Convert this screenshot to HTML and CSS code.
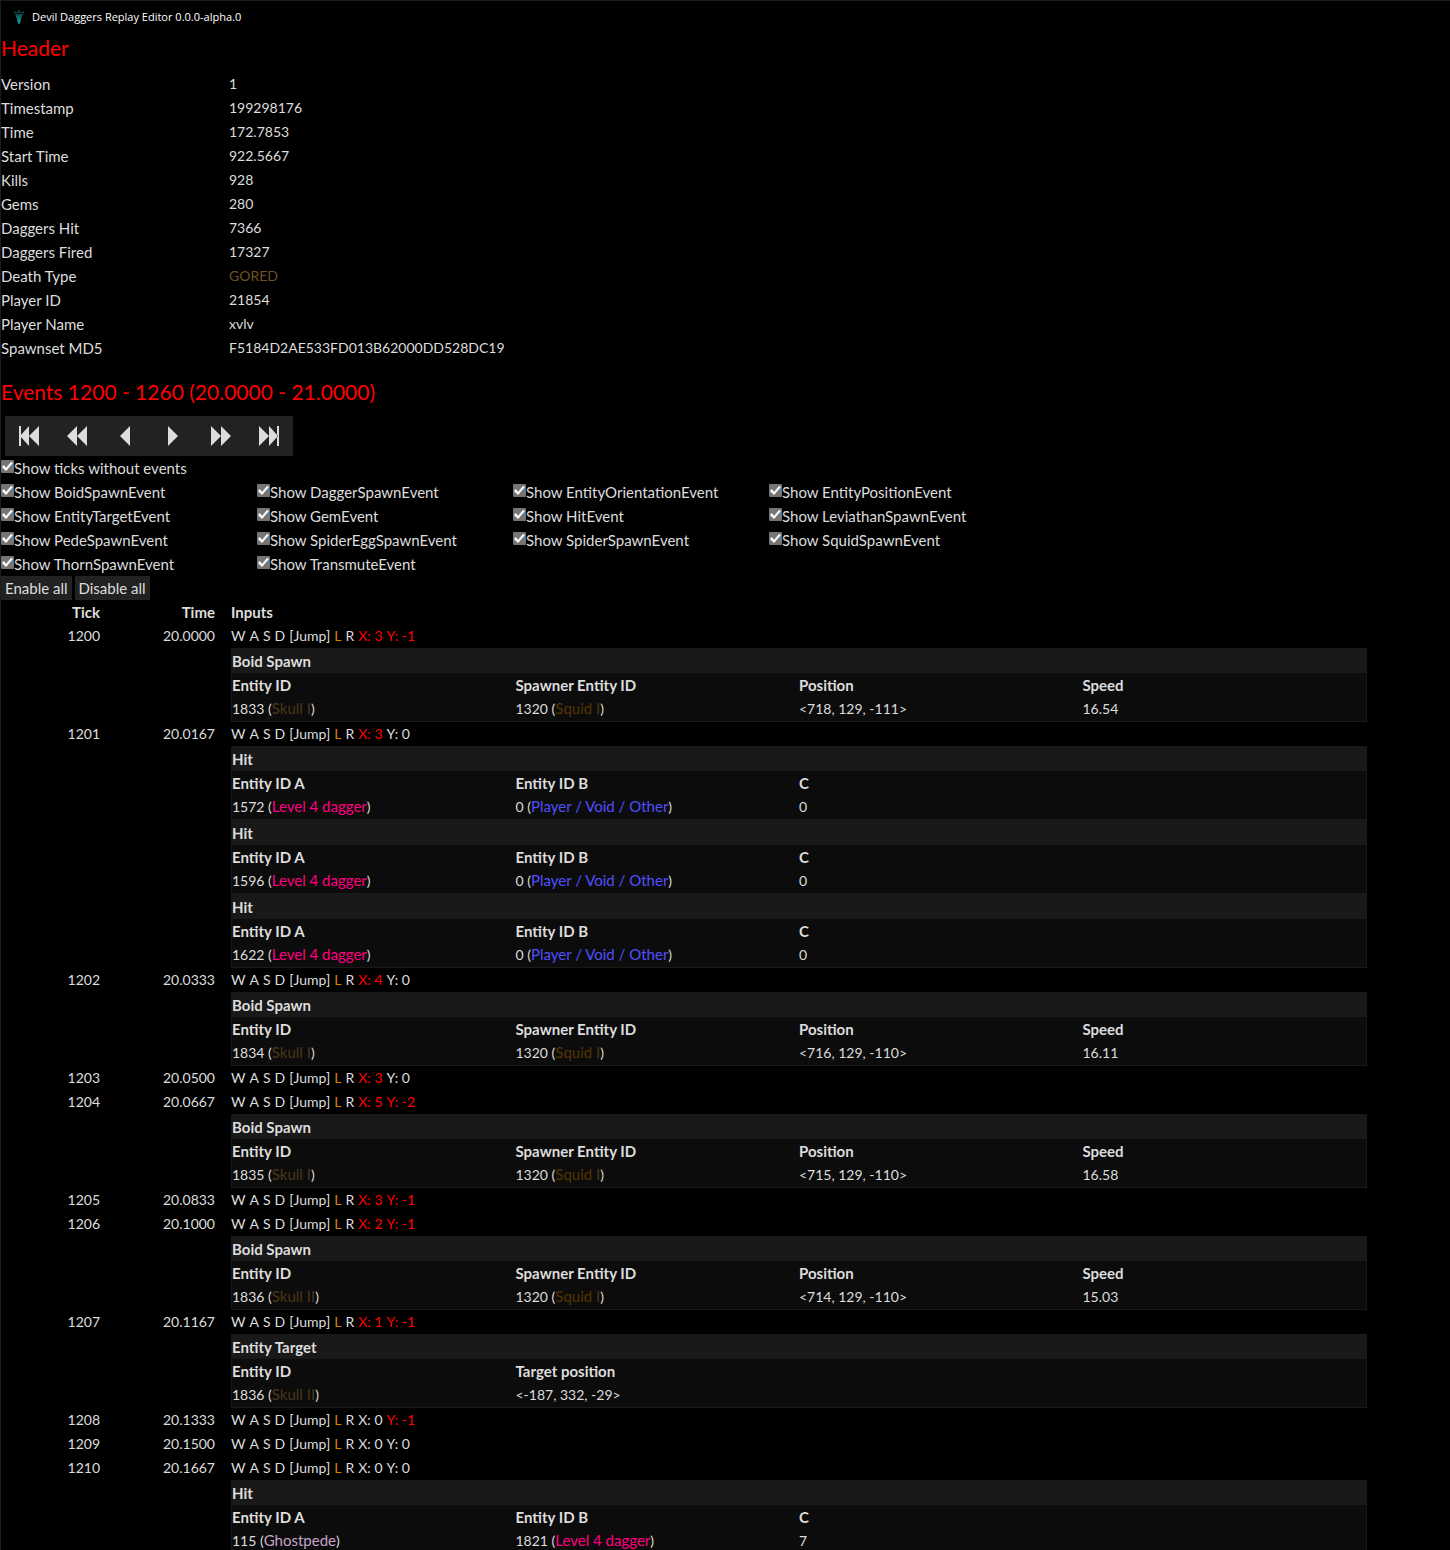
FILE: index.html
```html
<!DOCTYPE html>
<html lang="en">
<head>
<meta charset="utf-8">
<title>Devil Daggers Replay Editor</title>
<link rel="stylesheet" href="styles.css">
</head>
<body>
<header class="titlebar">
  <svg class="logo" viewBox="0 0 12 14" width="12" height="14" aria-hidden="true">
    <defs><linearGradient id="blade" x1="0" y1="0" x2="0" y2="1"><stop offset="0" stop-color="#0a4a4a"/><stop offset="1" stop-color="#12b5b5"/></linearGradient></defs>
    <path d="M1 2h10v1H1z M5 0h2v3H5z M1 1h1v3H1z M10 1h1v3h-1z" fill="#0a3f40"/>
    <path d="M2 4h8L8 9l-1 4-1 1-1-1-1-4z" fill="url(#blade)"/>
  </svg>
  <span>Devil Daggers Replay Editor 0.0.0-alpha.0</span>
</header>
<main class="content">
  <h2>Header</h2>
  <table class="info">
    <tr><th scope="row">Version</th><td>1</td></tr>
    <tr><th scope="row">Timestamp</th><td>199298176</td></tr>
    <tr><th scope="row">Time</th><td>172.7853</td></tr>
    <tr><th scope="row">Start Time</th><td>922.5667</td></tr>
    <tr><th scope="row">Kills</th><td>928</td></tr>
    <tr><th scope="row">Gems</th><td>280</td></tr>
    <tr><th scope="row">Daggers Hit</th><td>7366</td></tr>
    <tr><th scope="row">Daggers Fired</th><td>17327</td></tr>
    <tr><th scope="row">Death Type</th><td class="gored">GORED</td></tr>
    <tr><th scope="row">Player ID</th><td>21854</td></tr>
    <tr><th scope="row">Player Name</th><td>xvlv</td></tr>
    <tr><th scope="row">Spawnset MD5</th><td>F5184D2AE533FD013B62000DD528DC19</td></tr>
  </table>

  <h2>Events 1200 - 1260 (20.0000 - 21.0000)</h2>
  <div class="pager">
    <button type="button" aria-label="First"><svg viewBox="0 0 20 20"><path d="M0 0h2v20H0z M10 0v20L1 10z M20 0v20L10 10z"/></svg></button>
    <button type="button" aria-label="Back fast"><svg viewBox="0 0 20 20"><path d="M10 0v20L0 10z M20 0v20L10 10z"/></svg></button>
    <button type="button" aria-label="Back"><svg viewBox="0 0 20 20"><path d="M15 0v20L5 10z"/></svg></button>
    <button type="button" aria-label="Forward"><svg viewBox="0 0 20 20"><path d="M5 0v20l10-10z"/></svg></button>
    <button type="button" aria-label="Forward fast"><svg viewBox="0 0 20 20"><path d="M0 0v20l10-10z M10 0v20l10-10z"/></svg></button>
    <button type="button" aria-label="Last"><svg viewBox="0 0 20 20"><path d="M18 0h2v20h-2z M0 0v20l10-10z M10 0v20l9-10z"/></svg></button>
  </div>
  <label class="check"><input type="checkbox" checked>Show ticks without events</label>
  <div class="filters">
    <label class="check"><input type="checkbox" checked>Show BoidSpawnEvent</label>
    <label class="check"><input type="checkbox" checked>Show DaggerSpawnEvent</label>
    <label class="check"><input type="checkbox" checked>Show EntityOrientationEvent</label>
    <label class="check"><input type="checkbox" checked>Show EntityPositionEvent</label>
    <label class="check"><input type="checkbox" checked>Show EntityTargetEvent</label>
    <label class="check"><input type="checkbox" checked>Show GemEvent</label>
    <label class="check"><input type="checkbox" checked>Show HitEvent</label>
    <label class="check"><input type="checkbox" checked>Show LeviathanSpawnEvent</label>
    <label class="check"><input type="checkbox" checked>Show PedeSpawnEvent</label>
    <label class="check"><input type="checkbox" checked>Show SpiderEggSpawnEvent</label>
    <label class="check"><input type="checkbox" checked>Show SpiderSpawnEvent</label>
    <label class="check"><input type="checkbox" checked>Show SquidSpawnEvent</label>
    <label class="check"><input type="checkbox" checked>Show ThornSpawnEvent</label>
    <label class="check"><input type="checkbox" checked>Show TransmuteEvent</label>
  </div>
  <div class="actions"><button type="button">Enable all</button><button type="button">Disable all</button></div>

  <table class="ticks">
    <colgroup><col class="num"><col class="num"><col></colgroup>
    <thead><tr><th scope="col">Tick</th><th scope="col">Time</th><th scope="col">Inputs</th></tr></thead>
    <tbody>
    <tr><td>1200</td><td>20.0000</td><td><div class="inputs"><span>W</span><span>A</span><span>S</span><span>D</span><span>[Jump]</span><span class="held">L</span><span>R</span><span class="moved">X: 3</span><span class="moved">Y: -1</span></div></td></tr>
    <tr><td></td><td></td><td>
      <table class="event">
        <tr><th colspan="4">Boid Spawn</th></tr>
        <tr><th>Entity ID</th><th>Spawner Entity ID</th><th>Position</th><th>Speed</th></tr>
        <tr><td>1833 (<span class="skull1">Skull I</span>)</td><td>1320 (<span class="squid">Squid I</span>)</td><td>&lt;718, 129, -111&gt;</td><td>16.54</td></tr>
      </table>
    </td></tr>
    <tr><td>1201</td><td>20.0167</td><td><div class="inputs"><span>W</span><span>A</span><span>S</span><span>D</span><span>[Jump]</span><span class="held">L</span><span>R</span><span class="moved">X: 3</span><span>Y: 0</span></div></td></tr>
    <tr><td></td><td></td><td>
      <table class="event">
        <tr><th colspan="4">Hit</th></tr>
        <tr><th>Entity ID A</th><th>Entity ID B</th><th>C</th><th></th></tr>
        <tr><td>1572 (<span class="dagger">Level 4 dagger</span>)</td><td>0 (<span class="other">Player / Void / Other</span>)</td><td>0</td><td></td></tr>
      </table>
      <table class="event">
        <tr><th colspan="4">Hit</th></tr>
        <tr><th>Entity ID A</th><th>Entity ID B</th><th>C</th><th></th></tr>
        <tr><td>1596 (<span class="dagger">Level 4 dagger</span>)</td><td>0 (<span class="other">Player / Void / Other</span>)</td><td>0</td><td></td></tr>
      </table>
      <table class="event">
        <tr><th colspan="4">Hit</th></tr>
        <tr><th>Entity ID A</th><th>Entity ID B</th><th>C</th><th></th></tr>
        <tr><td>1622 (<span class="dagger">Level 4 dagger</span>)</td><td>0 (<span class="other">Player / Void / Other</span>)</td><td>0</td><td></td></tr>
      </table>
    </td></tr>
    <tr><td>1202</td><td>20.0333</td><td><div class="inputs"><span>W</span><span>A</span><span>S</span><span>D</span><span>[Jump]</span><span class="held">L</span><span>R</span><span class="moved">X: 4</span><span>Y: 0</span></div></td></tr>
    <tr><td></td><td></td><td>
      <table class="event">
        <tr><th colspan="4">Boid Spawn</th></tr>
        <tr><th>Entity ID</th><th>Spawner Entity ID</th><th>Position</th><th>Speed</th></tr>
        <tr><td>1834 (<span class="skull1">Skull I</span>)</td><td>1320 (<span class="squid">Squid I</span>)</td><td>&lt;716, 129, -110&gt;</td><td>16.11</td></tr>
      </table>
    </td></tr>
    <tr><td>1203</td><td>20.0500</td><td><div class="inputs"><span>W</span><span>A</span><span>S</span><span>D</span><span>[Jump]</span><span class="held">L</span><span>R</span><span class="moved">X: 3</span><span>Y: 0</span></div></td></tr>
    <tr><td>1204</td><td>20.0667</td><td><div class="inputs"><span>W</span><span>A</span><span>S</span><span>D</span><span>[Jump]</span><span class="held">L</span><span>R</span><span class="moved">X: 5</span><span class="moved">Y: -2</span></div></td></tr>
    <tr><td></td><td></td><td>
      <table class="event">
        <tr><th colspan="4">Boid Spawn</th></tr>
        <tr><th>Entity ID</th><th>Spawner Entity ID</th><th>Position</th><th>Speed</th></tr>
        <tr><td>1835 (<span class="skull1">Skull I</span>)</td><td>1320 (<span class="squid">Squid I</span>)</td><td>&lt;715, 129, -110&gt;</td><td>16.58</td></tr>
      </table>
    </td></tr>
    <tr><td>1205</td><td>20.0833</td><td><div class="inputs"><span>W</span><span>A</span><span>S</span><span>D</span><span>[Jump]</span><span class="held">L</span><span>R</span><span class="moved">X: 3</span><span class="moved">Y: -1</span></div></td></tr>
    <tr><td>1206</td><td>20.1000</td><td><div class="inputs"><span>W</span><span>A</span><span>S</span><span>D</span><span>[Jump]</span><span class="held">L</span><span>R</span><span class="moved">X: 2</span><span class="moved">Y: -1</span></div></td></tr>
    <tr><td></td><td></td><td>
      <table class="event">
        <tr><th colspan="4">Boid Spawn</th></tr>
        <tr><th>Entity ID</th><th>Spawner Entity ID</th><th>Position</th><th>Speed</th></tr>
        <tr><td>1836 (<span class="skull2">Skull II</span>)</td><td>1320 (<span class="squid">Squid I</span>)</td><td>&lt;714, 129, -110&gt;</td><td>15.03</td></tr>
      </table>
    </td></tr>
    <tr><td>1207</td><td>20.1167</td><td><div class="inputs"><span>W</span><span>A</span><span>S</span><span>D</span><span>[Jump]</span><span class="held">L</span><span>R</span><span class="moved">X: 1</span><span class="moved">Y: -1</span></div></td></tr>
    <tr><td></td><td></td><td>
      <table class="event">
        <tr><th colspan="4">Entity Target</th></tr>
        <tr><th>Entity ID</th><th>Target position</th><th></th><th></th></tr>
        <tr><td>1836 (<span class="skull2">Skull II</span>)</td><td>&lt;-187, 332, -29&gt;</td><td></td><td></td></tr>
      </table>
    </td></tr>
    <tr><td>1208</td><td>20.1333</td><td><div class="inputs"><span>W</span><span>A</span><span>S</span><span>D</span><span>[Jump]</span><span class="held">L</span><span>R</span><span>X: 0</span><span class="moved">Y: -1</span></div></td></tr>
    <tr><td>1209</td><td>20.1500</td><td><div class="inputs"><span>W</span><span>A</span><span>S</span><span>D</span><span>[Jump]</span><span class="held">L</span><span>R</span><span>X: 0</span><span>Y: 0</span></div></td></tr>
    <tr><td>1210</td><td>20.1667</td><td><div class="inputs"><span>W</span><span>A</span><span>S</span><span>D</span><span>[Jump]</span><span class="held">L</span><span>R</span><span>X: 0</span><span>Y: 0</span></div></td></tr>
    <tr><td></td><td></td><td>
      <table class="event">
        <tr><th colspan="4">Hit</th></tr>
        <tr><th>Entity ID A</th><th>Entity ID B</th><th>C</th><th></th></tr>
        <tr><td>115 (<span class="ghost">Ghostpede</span>)</td><td>1821 (<span class="dagger">Level 4 dagger</span>)</td><td>7</td><td></td></tr>
      </table>
    </td></tr>
    </tbody>
  </table>
</main>
</body>
</html>
```
FILE: styles.css
```css
* { box-sizing: border-box; }

html {
  height: 100%;
  overflow: hidden;
  background: #000;
}

body {
  height: 100%;
  margin: 0;
  overflow: hidden;
  border: 1px solid #1c1c1c;
  border-width: 1px 0 0 1px;
  background: #000;
  color: #ddd;
  font: 14px/24px Lato, Carlito, sans-serif;
}

.titlebar {
  display: flex;
  align-items: center;
  gap: 7px;
  height: 31px;
  padding-left: 12px;
  color: #fff;
  font: 11px/16px "Open Sans", sans-serif;
}

.logo { flex: none; }

h2 {
  margin: 0 0 8px;
  color: #f00;
  font-size: 21px;
  font-weight: 400;
  line-height: 32px;
}

.content { max-width: 1366px; }

table {
  width: 100%;
  border-collapse: separate;
  border-spacing: 0;
  table-layout: fixed;
}

th, td {
  height: 24px;
  padding: 0;
  text-align: left;
  vertical-align: top;
}

th { font-size: 15px; }

.info { margin-bottom: 16px; }
.info th { width: 228px; font-weight: 400; }
.gored { color: #735021; }

button {
  padding: 0;
  border: 0;
  background: #222;
  color: #ddd;
  font: inherit;
  font-size: 15px;
}

.pager { display: flex; margin-left: 4px; }

.pager button {
  display: flex;
  align-items: center;
  justify-content: center;
  width: 48px;
  height: 40px;
}

.pager svg { width: 20px; height: 20px; fill: #ddd; }

.check { display: flex; align-items: flex-start; font-size: 15px; }

.check input {
  position: relative;
  flex: none;
  width: 13px;
  height: 13px;
  margin: 4px 0 0;
  appearance: none;
  border-radius: 1px;
  background: #767676;
}

.check input:checked::before {
  content: "";
  display: block;
  width: 13px;
  height: 13px;
  background: #fff;
  clip-path: polygon(1px 7px, 3px 5px, 5px 8px, 10px 2px, 12px 3px, 5px 11px);
}

.filters {
  display: grid;
  grid-template-columns: repeat(4, 256px);
}

.actions { display: flex; gap: 3px; }
.actions button { height: 24px; padding: 0 4px; }

.num { width: 115px; }
.ticks > * > tr > :nth-child(-n+2) { padding-right: 16px; text-align: right; }

.inputs { display: flex; gap: 4px; }
.held { color: #d98200; }
.moved { color: #f00; }

.event {
  border: 1px solid #191919;
  background: #0c0c0c;
}

.event tr:first-child th { background: #191919; }
.event span { font-size: 15px; line-height: 16px; }

.skull1 { color: #4b3718; }
.skull2 { color: #4b3718; }
.squid { color: #553500; }
.dagger { color: #ff0080; }
.other { color: #5050ff; }
.ghost { color: #c8a2c8; }
```
